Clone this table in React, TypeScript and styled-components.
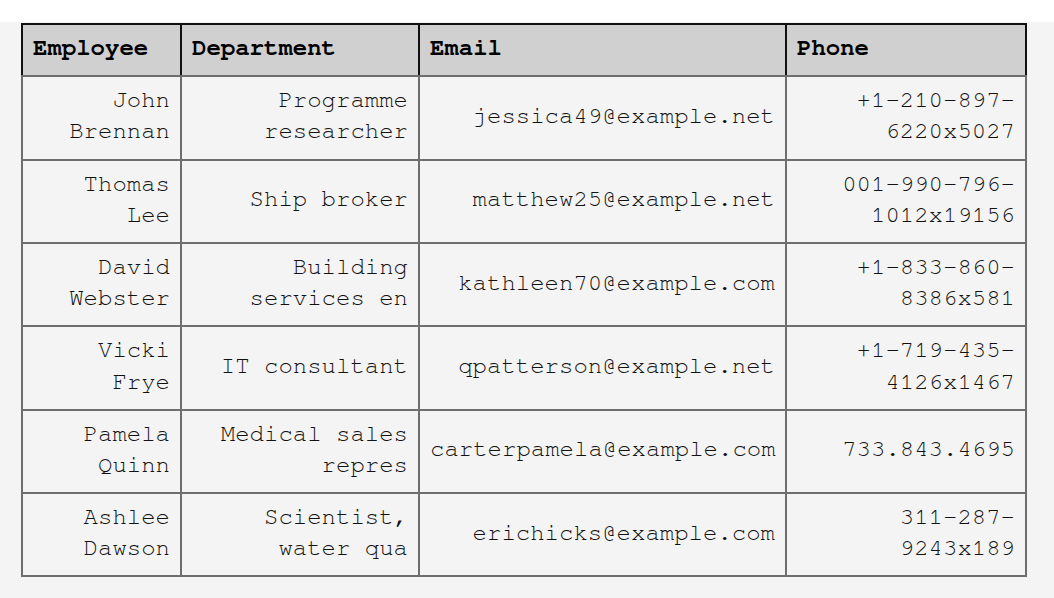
import React from "react";
import styled, { createGlobalStyle } from "styled-components";

const Global = createGlobalStyle`
  html, body { margin: 0; padding: 0; background: #ffffff; }
  #root { min-height: 100vh; }
`;

const Page = styled.div`
  margin-top: 22px;
  min-height: calc(100vh - 22px);
  box-sizing: border-box;
  background: #f4f4f4;
  padding: 1px 21px 22px 21px;
`;

const Table = styled.table`
  border-collapse: collapse;
  table-layout: fixed;
  width: 1004px;
  font-family: "Nimbus Mono PS", "Nimbus Mono L", "FreeMono", "Courier New", Courier, "Liberation Mono", monospace;
  font-size: 24px;
  line-height: 1.3;
`;

const HeadCell = styled.th`
  background: #d0d0d0;
  color: #000;
  font-weight: bold;
  text-align: left;
  padding: 8px 10px 11px 10px;
  border: 2px solid #111;
  border-bottom-color: #6e6e6e;
`;

const Cell = styled.td`
  background: #f4f4f4;
  color: #111;
  text-align: right;
  vertical-align: middle;
  padding: 8px 10px 11px 10px;
  border: 2px solid #6e6e6e;
`;

const rows = [
  ["John Brennan", "Programme researcher", "jessica49@example.net", "+1-210-897-6220x5027"],
  ["Thomas Lee", "Ship broker", "matthew25@example.net", "001-990-796-1012x19156"],
  ["David Webster", "Building services en", "kathleen70@example.com", "+1-833-860-8386x581"],
  ["Vicki Frye", "IT consultant", "qpatterson@example.net", "+1-719-435-4126x1467"],
  ["Pamela Quinn", "Medical sales repres", "carterpamela@example.com", "733.843.4695"],
  ["Ashlee Dawson", "Scientist, water qua", "erichicks@example.com", "311-287-9243x189"],
];

const widths = [159, 238, 367, 240];

export default function App() {
  return (
    <>
      <Global />
      <Page>
        <Table>
          <colgroup>
            {widths.map((w, i) => (
              <col key={i} style={{ width: w }} />
            ))}
          </colgroup>
          <thead>
            <tr>
              <HeadCell>Employee</HeadCell>
              <HeadCell>Department</HeadCell>
              <HeadCell>Email</HeadCell>
              <HeadCell>Phone</HeadCell>
            </tr>
          </thead>
          <tbody>
            {rows.map((r, i) => (
              <tr key={i}>
                {r.map((c, j) => (
                  <Cell key={j}>{c}</Cell>
                ))}
              </tr>
            ))}
          </tbody>
        </Table>
      </Page>
    </>
  );
}
